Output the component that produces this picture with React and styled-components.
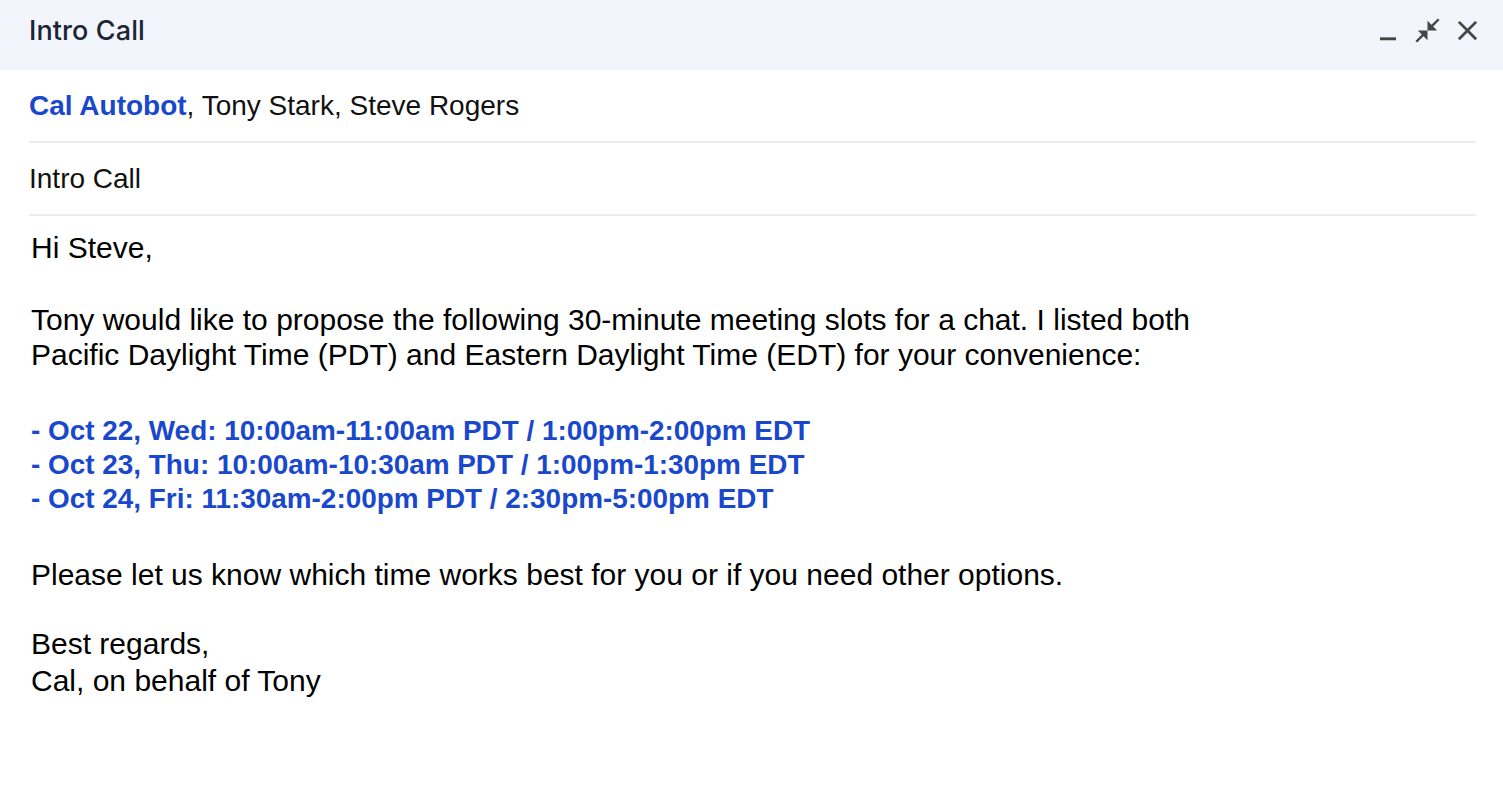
import React from "react";
import styled, { createGlobalStyle } from "styled-components";

const GlobalStyle = createGlobalStyle`
  html, body {
    margin: 0;
    padding: 0;
    background: #ffffff;
  }
  body {
    font-family: "Liberation Sans", Arial, Helvetica, sans-serif;
    color: #000;
  }
`;

const Window = styled.div`
  width: 1503px;
  min-height: 811px;
  background: #fff;
  display: flex;
  flex-direction: column;
`;

const Header = styled.div`
  height: 70px;
  box-sizing: border-box;
  background: #f2f6fc;
  display: flex;
  align-items: center;
  justify-content: space-between;
  padding: 0 19px 10px 29px;
`;

const Title = styled.div`
  font-family: Inter, "Noto Sans", sans-serif;
  font-size: 27px;
  font-weight: 500;
  color: #1b2537;
  letter-spacing: 0.1px;
`;

const Controls = styled.div`
  display: flex;
  align-items: center;
  gap: 9px;
`;

const IconButton = styled.button`
  width: ${({ $size }) => $size}px;
  height: ${({ $size }) => $size}px;
  padding: 0;
  border: none;
  background: transparent;
  display: flex;
  align-items: center;
  justify-content: center;
  color: #444746;
  cursor: pointer;

  svg {
    width: ${({ $size }) => $size}px;
    height: ${({ $size }) => $size}px;
    fill: currentColor;
  }
`;

const Fields = styled.div`
  padding: 0 27px 0 29px;
`;

const FieldRow = styled.div`
  height: 71px;
  display: flex;
  align-items: center;
  border-bottom: 2px solid #ededed;
  font-size: 28px;
  color: #111;
`;

const Sender = styled.span`
  color: #1948cc;
  font-weight: 700;
`;

const Body = styled.div`
  padding: 14px 29px 40px 31px;
  font-size: 30px;
  line-height: 35px;
  color: #000;
`;

const Para = styled.p`
  margin: 0 0 ${({ $gap }) => $gap}px 0;
  line-height: ${({ $lh }) => $lh || 35}px;
`;

const SlotList = styled.div`
  margin: 0 0 41px 0;
  font-size: 27.9px;
  line-height: 34px;
  font-weight: 700;
  color: #1948cc;
`;

const MinimizeIcon = () => (
  <svg viewBox="0 0 24 24">
    <path d="M6 17.5h12v2.2H6z" />
  </svg>
);

const CompressIcon = () => (
  <svg viewBox="0 0 24 24">
    <path d="M22 3.41 16.71 8.7 20 12h-8V4l3.29 3.29L20.59 2 22 3.41zM3.41 22l5.29-5.29L12 20v-8H4l3.29 3.29L2 20.59 3.41 22z" />
  </svg>
);

const CloseIcon = () => (
  <svg viewBox="0 0 24 24">
    <path d="M19 6.41 17.59 5 12 10.59 6.41 5 5 6.41 10.59 12 5 17.59 6.41 19 12 13.41 17.59 19 19 17.59 13.41 12z" />
  </svg>
);

const slots = [
  "- Oct 22, Wed: 10:00am-11:00am PDT / 1:00pm-2:00pm EDT",
  "- Oct 23, Thu: 10:00am-10:30am PDT / 1:00pm-1:30pm EDT",
  "- Oct 24, Fri: 11:30am-2:00pm PDT / 2:30pm-5:00pm EDT",
];

export default function App() {
  return (
    <Window>
      <GlobalStyle />
      <Header>
        <Title>Intro Call</Title>
        <Controls>
          <IconButton $size={32} aria-label="Minimize">
            <MinimizeIcon />
          </IconButton>
          <IconButton $size={29} aria-label="Exit full screen">
            <CompressIcon />
          </IconButton>
          <IconButton $size={33} aria-label="Close">
            <CloseIcon />
          </IconButton>
        </Controls>
      </Header>

      <Fields>
        <FieldRow>
          <span>
            <Sender>Cal Autobot</Sender>, Tony Stark, Steve Rogers
          </span>
        </FieldRow>
        <FieldRow>Intro Call</FieldRow>
      </Fields>

      <Body>
        <Para $gap={37}>Hi Steve,</Para>
        <Para $gap={42}>
          Tony would like to propose the following 30-minute meeting slots for a chat. I listed both
          <br />
          Pacific Daylight Time (PDT) and Eastern Daylight Time (EDT) for your convenience:
        </Para>
        <SlotList>
          {slots.map((s) => (
            <div key={s}>{s}</div>
          ))}
        </SlotList>
        <Para $gap={33}>
          Please let us know which time works best for you or if you need other options.
        </Para>
        <Para $gap={0} $lh={37}>
          Best regards,
          <br />
          Cal, on behalf of Tony
        </Para>
      </Body>
    </Window>
  );
}
